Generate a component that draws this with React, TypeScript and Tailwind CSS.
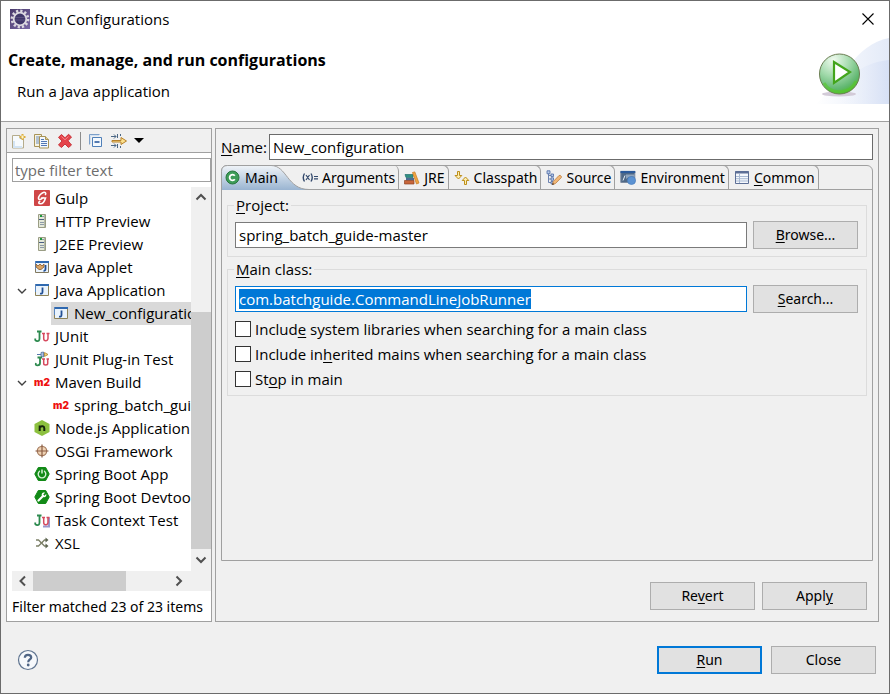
import { useEffect, useRef, type ReactNode } from "react";

type IconProps = { children: ReactNode; size?: number };

function Icon({ children, size = 16 }: IconProps) {
  return (
    <svg width={size} height={size} viewBox="0 0 16 16" className="shrink-0" aria-hidden="true">
      {children}
    </svg>
  );
}

const GearIcon = () => (
  <svg width="20" height="20" viewBox="0 0 20 20" className="shrink-0" aria-hidden="true">
    <defs>
      <linearGradient id="gearBg" x1="0" y1="0" x2="1" y2="1">
        <stop offset="0" stopColor="#4a3a6b" />
        <stop offset="1" stopColor="#7a68a6" />
      </linearGradient>
    </defs>
    <rect width="20" height="20" fill="url(#gearBg)" />
    <circle cx="10" cy="10" r="8" fill="none" stroke="#dcd8e0" strokeWidth="2.8" strokeDasharray="2.2 1.99" />
    <circle cx="10" cy="10" r="6.3" fill="#40376a" stroke="#dcd8e0" strokeWidth="1.8" />
    <path d="M5 8.500h10M5 11h10" stroke="#5b5080" strokeWidth="1" />
  </svg>
);

const NewIcon = () => (
  <Icon>
    <path d="M1.500 2.500h7.500v3h3.500v9.500h-11z" fill="#f6fafd" stroke="#b5ac8c" />
    <path d="M3 8v6h8" fill="none" stroke="#d3e4f4" strokeWidth="2" />
    <path d="M11.500 1v6M8.500 4h6" stroke="#dcae40" strokeWidth="2" />
    <path d="M11.500 2.500v3M10 4h3" stroke="#fff6c8" />
  </Icon>
);

const CopyIcon = () => (
  <Icon>
    <path d="M.5 1.500h7v12h-7z" fill="#f7f3e2" stroke="#a89458" />
    <path d="M2 4h3M2 6h3M2 8h3M2 10h3" stroke="#6d8fc0" />
    <path d="M5.500 3.500h6l3 3v8.500h-9z" fill="#f2f7fd" stroke="#a89458" />
    <path d="M11.500 3.500v3h3" fill="#e3cf90" stroke="#a89458" />
    <path d="M7 6.500h3M7 8.500h6M7 10.500h6M7 12.500h6" stroke="#5278b5" />
  </Icon>
);

const DeleteIcon = () => (
  <Icon>
    <path
      d="M1.500 4.300 4.500 1.500 8 4.800 11.500 1.300 14.500 4 11 7.800 14.500 12 11.500 14.500 8 11 4.500 14.500 1.500 12 5 8z"
      fill="#e5434a"
      stroke="#c9363c"
    />
    <path d="M4.500 3.500 8 6.800l3.500-3.300" fill="none" stroke="#f3858a" />
  </Icon>
);

const CollapseIcon = () => (
  <Icon>
    <path d="M1.500 11.500v-10h10" fill="none" stroke="#7c9fc9" />
    <path d="M2.500 11V2.500H11" fill="none" stroke="#cfe0f2" />
    <path d="M4.500 4.500h9v9h-9z" fill="#f4f9fe" stroke="#4f7fb8" />
    <path d="M6.500 9h5" stroke="#1f4f96" strokeWidth="1.500" />
  </Icon>
);

const FilterIcon = () => (
  <Icon>
    <path d="M0 3.500h5M0 12.500h5" stroke="#4b6785" />
    <path d="M3 1.500 5 3.500 3 5.500M3 10.500l2 2-2 2M6.500 1v4M6.500 11v4M9.500 1v2M9.500 13v2" fill="none" stroke="#4b6785" />
    <path d="M1 7.500h9V4.500L15.500 8 10 11.500V9H1z" fill="#fbe08c" stroke="#b7812a" />
  </Icon>
);

const GulpIcon = () => (
  <Icon>
    <rect width="16" height="16" rx="1" fill="#cf4647" />
    <path
      d="M11.500 4.500c.8-1.800-.6-2.800-2.300-2C6.500 3.500 4.300 6.500 4.500 8.500c.2 1.700 2.800 1 4.500-.8M7.500 8h4C10.800 10.500 9.500 13.800 6.500 13.800c-2 0-2.300-1.500-.8-2.300"
      fill="none"
      stroke="#fff"
      strokeWidth="1.600"
      strokeLinecap="round"
    />
  </Icon>
);

const ServerIcon = () => (
  <Icon>
    <path d="M4.500 1.500h7v13h-7z" fill="#e4e8d8" stroke="#9a9d84" />
    <path d="M6 3.500h4M6 9.500h4M6 11.500h4" stroke="#8d9aa8" />
    <rect x="6" y="2" width="2" height="2" fill="#1f9a3c" />
    <path d="M5 6.500h6" stroke="#4a5e83" />
    <path d="M10.500 2v12" stroke="#b4b9a8" />
  </Icon>
);

const WindowJIcon = ({ applet = false }: { applet?: boolean }) => (
  <Icon>
    <path d="M1.500 2.500h13v11h-13z" fill="#eaf3fc" stroke={applet ? "#82795e" : "#8d8258"} />
    <path d="M1 3h14" stroke="#2f69b0" strokeWidth="2" />
    <path d="M1.500 2v8" stroke="#5b86bd" />
    <path d={applet ? "M11.500 6v4q0 2-2 1.800" : "M8.500 5.500v4.500q0 2-2.500 1.600"} fill="none" stroke="#214f94" strokeWidth="1.800" />
    {applet && (
      <path d="M2 5l2 2 2-2 2 2 2-2v3L7 10.500H5L2 8z" fill="#d9a566" stroke="#8c5a2b" strokeWidth=".8" />
    )}
  </Icon>
);

const JunitIcon = ({ variant = "plain" }: { variant?: "plain" | "plugin" | "task" }) => (
  <Icon>
    {variant === "plugin" && (
      <>
        <path d="M3 3.500h4" stroke="#5577aa" />
        <path d="M7 1.500 9.500 1v5L7 5.500z" fill="#a9c0e2" stroke="#53719f" strokeWidth=".8" />
        <path d="m10.500 1.500 3.500 2-3.500 2z" fill="#f4d779" stroke="#a98030" strokeWidth=".8" />
      </>
    )}
    {variant === "task" && <path d="M9 14.500h6V5.500" fill="none" stroke="#9a97cb" strokeWidth="2" />}
    <path
      d={variant === "plugin" ? "M3.500 6.500h4.500M6 6.500v5.500q0 2.300-2.500 2.300t-1.500-2.300" : "M3 3.500h4.500M5.500 3.500v7q0 2.800-2.500 2.500t-1.500-2.500"}
      fill="none"
      stroke="#2d8a4f"
      strokeWidth="1.800"
    />
    <path
      d={variant === "plugin" ? "M8 8h3M12.500 8H15M9.700 8v4.500q0 1.500 2 1.500t2-1.500V8" : "M8 5.500h3M12.500 5.500H15.500M9.700 5.500v5q0 2.300 2 2.300t2.300-2.300v-5"}
      fill="none"
      stroke="#d64a5e"
      strokeWidth="1.500"
    />
  </Icon>
);

const MavenIcon = () => (
  <span className="w-4 shrink-0 text-center font-['Inter'] text-[10px] leading-4 font-black text-[#ee1111]" aria-hidden="true">
    m2
  </span>
);

const NodeIcon = () => (
  <Icon>
    <path d="m8 0 7.500 4v8L8 16 .5 12V4z" fill="#8cc03f" />
    <path d="M5.700 11V5.500M5.700 7.300Q7 6 8.800 6.200q1.500.2 1.500 2V11" fill="none" stroke="#16240c" strokeWidth="2" />
  </Icon>
);

const OsgiIcon = () => (
  <Icon>
    <circle cx="8" cy="8" r="4.700" fill="#f0d3b4" stroke="#a87f62" strokeWidth="1.300" />
    <path d="M8 1.500v13M1.500 8h13" stroke="#8a5d44" strokeWidth="1.200" />
  </Icon>
);

const SpringIcon = ({ tool = false }: { tool?: boolean }) => (
  <Icon>
    <path d="M4.300 1.500h7.400L15.200 8l-3.500 6.500H4.300L.8 8z" fill="#128a17" stroke="#128a17" strokeLinejoin="round" />
    {tool ? (
      <>
        <path d="m4.500 11.500 4.500-4.500" stroke="#fff" strokeWidth="2.200" strokeLinecap="round" />
        <path d="M11 3.800 9.200 5.600l1.200 1.200 1.800-1.700c.6 1.600-.6 3.300-2.300 3.200S7.200 6.500 7.800 5.100 9.800 3.300 11 3.800" fill="#fff" />
      </>
    ) : (
      <>
        <path d="M5.500 5.200a3.800 3.800 0 1 0 5 0" fill="none" stroke="#d9f3d9" strokeWidth="1.400" strokeLinecap="round" />
        <path d="M8 3.500v4" stroke="#d9f3d9" strokeWidth="1.500" />
      </>
    )}
  </Icon>
);

const XslIcon = () => (
  <Icon>
    <path d="M2 5h2.500l6 6H13M2 11h2.500l6-6H13" fill="none" stroke="#7d8168" strokeWidth="1.300" />
    <path d="m11.500 2.500 3 2.500-3 2.500zM11.500 8.500l3 2.500-3 2.500z" fill="#5c6450" />
  </Icon>
);

const ClassIcon = () => (
  <Icon>
    <circle cx="7.500" cy="7.500" r="6.500" fill="#3d9c58" stroke="#27763d" />
    <path d="M9.800 5.700A2.900 2.900 0 1 0 9.800 9.300" fill="none" stroke="#fff" strokeWidth="1.800" />
  </Icon>
);

const ArgumentsIcon = () => (
  <Icon>
    <path d="M2.500 3.500Q0 7.500 2.500 11.500M9 3.500q2.500 4 0 8" fill="none" stroke="#33496c" strokeWidth="1.400" />
    <path d="m4 5 3.500 5M7.500 5 4 10M12 6.500h4M12 8.800h4" fill="none" stroke="#33496c" strokeWidth="1.200" />
  </Icon>
);

const JreIcon = () => (
  <Icon>
    <path d="M1 4.500h8v3H2z" fill="#2f8f83" stroke="#1f6f6b" strokeWidth=".7" />
    <path d="M2 8h8v2.500H2z" fill="#4c6b94" />
    <path d="M.5 10.500H10V14H.5z" fill="#c7663b" stroke="#8f4322" strokeWidth=".7" />
    <path d="m8.500 2.500 2.300-.6L15 13l-2.500 1z" fill="#f0a544" stroke="#c6791e" strokeWidth=".7" />
  </Icon>
);

const ClasspathIcon = () => (
  <Icon>
    <path d="M3.500 1.500h2v4h2.300L4.500 9 1 5.500h2.500z" fill="#fdeeb0" stroke="#bd8f1c" />
    <path d="M10.500 14.500h2v-4h2.300L11.500 7 8.200 10.500h2.300z" fill="#fdeeb0" stroke="#bd8f1c" />
  </Icon>
);

const SourceIcon = () => (
  <Icon>
    <path d="M2.500 3v9.500H5M2.500 5.500H5M2.500 9H5" fill="none" stroke="#6d83b0" />
    <path d="M1 .8h3v3H1zM5 4h2.500v2.500H5zM5 7.800h2.500v2.500H5zM5 11.500h2v2.500H5z" fill="#b9cbe8" stroke="#4d6aa5" strokeWidth=".8" />
    <path d="m6.500 14.500.8-3L13 5.500q1.300-.6 2.300.8.4 1-.2 1.500L9.500 13.500z" fill="#f2b877" stroke="#bd7c3e" strokeWidth=".8" />
    <path d="m6 15 .8-2 1.500 1.200z" fill="#4c3524" />
  </Icon>
);

const EnvironmentIcon = () => (
  <Icon>
    <path d="M.8 1.500h14v11H.8z" fill="#4f6987" stroke="#7d8ba0" />
    <path d="M.5 2h14.800" stroke="#2b5a9b" strokeWidth="2.200" />
    <path d="M3 10.500 5 5.500" stroke="#e6eef7" />
    <path d="M6 4.500h8.500V7Q10 5 6 9z" fill="#8ea4bd" />
    <circle cx="11.500" cy="10.500" r="4" fill="#5b92d2" stroke="#4a80c0" strokeWidth=".7" />
  </Icon>
);

const TableIcon = () => (
  <Icon>
    <path d="M1.500 1.500h13v12h-13z" fill="#f5f8fc" stroke="#5d6f96" />
    <path d="M1 2.500h14" stroke="#5d6f96" strokeWidth="2" />
    <path d="M5.500 4v9M2 6.500h12M2 8.700h12M2 11h12" stroke="#a9bad3" />
  </Icon>
);

type Node = { label: string; icon: ReactNode; open?: boolean; child?: boolean; selected?: boolean };

const nodes: Node[] = [
  { label: "Gulp", icon: <GulpIcon /> },
  { label: "HTTP Preview", icon: <ServerIcon /> },
  { label: "J2EE Preview", icon: <ServerIcon /> },
  { label: "Java Applet", icon: <WindowJIcon applet /> },
  { label: "Java Application", icon: <WindowJIcon />, open: true },
  { label: "New_configuration", icon: <WindowJIcon />, child: true, selected: true },
  { label: "JUnit", icon: <JunitIcon /> },
  { label: "JUnit Plug-in Test", icon: <JunitIcon variant="plugin" /> },
  { label: "Maven Build", icon: <MavenIcon />, open: true },
  { label: "spring_batch_guide", icon: <MavenIcon />, child: true },
  { label: "Node.js Application", icon: <NodeIcon /> },
  { label: "OSGi Framework", icon: <OsgiIcon /> },
  { label: "Spring Boot App", icon: <SpringIcon /> },
  { label: "Spring Boot Devtools", icon: <SpringIcon tool /> },
  { label: "Task Context Test", icon: <JunitIcon variant="task" /> },
  { label: "XSL", icon: <XslIcon /> },
];

const Chevron = ({ d, bold = false }: { d: string; bold?: boolean }) => (
  <svg width="12" height="12" viewBox="0 0 12 12" className="shrink-0" aria-hidden="true">
    <path d={d} fill="none" stroke={bold ? "#505050" : "#404040"} strokeWidth={bold ? 2 : 1.4} />
  </svg>
);

function Tree() {
  return (
    <ul role="tree" aria-label="Launch configurations" className="min-w-0 flex-1 overflow-hidden">
      {nodes.map((n) => (
        <li
          key={n.label}
          role="treeitem"
          aria-selected={!!n.selected}
          className={`flex h-[23px] items-center whitespace-nowrap ${n.child ? "pl-10" : "pl-1"}`}
        >
          {!n.child && (
            <span className="flex w-[18px] shrink-0">{n.open && <Chevron d="M2 4l4 4 4-4" />}</span>
          )}
          <span className={`flex h-full grow items-center gap-[5px] pb-px ${n.selected ? "bg-[#d9d9d9]" : ""} ${n.child ? "-ml-px pl-0.5" : ""}`}>
            {n.icon}
            {n.label}
          </span>
        </li>
      ))}
    </ul>
  );
}

const toolButton = "flex h-5 w-5 items-center justify-center";

function Sidebar() {
  return (
    <section className="flex w-[206px] shrink-0 flex-col overflow-hidden border border-[#a0a0a0] bg-white">
      <div role="toolbar" className="flex h-6 shrink-0 items-center gap-[3px] border-b border-[#a0a0a0] bg-[#f0f0f0] pl-[2px]">
        <button className={toolButton} aria-label="New launch configuration"><NewIcon /></button>
        <button className={toolButton} aria-label="Duplicate"><CopyIcon /></button>
        <button className={toolButton} aria-label="Delete"><DeleteIcon /></button>
        <span className="mx-[2px] h-[18px] w-px bg-[#8c8c8c]" />
        <button className={toolButton} aria-label="Collapse all"><CollapseIcon /></button>
        <button className={toolButton} aria-label="Filter"><FilterIcon /></button>
        <button className="flex h-5 items-center pl-0.5" aria-label="Filter menu">
          <svg width="10" height="5" viewBox="0 0 10 5" aria-hidden="true"><path d="M0 0h10L5 5z" /></svg>
        </button>
      </div>
      <div className="flex min-h-0 flex-1 flex-col pt-[5px] pl-[5px]">
        <input
          aria-label="Filter"
          placeholder="type filter text"
          className="h-6 w-full shrink-0 border border-[#a0a0a0] px-0.5 outline-none placeholder:text-[#6d6d6d]"
        />
        <div className="mt-[5px] flex min-h-0 flex-1">
          <Tree />
          <div className="flex w-5 shrink-0 flex-col items-center bg-[#f0f0f0]" aria-hidden="true">
            <div className="flex h-5 items-center"><Chevron bold d="M1.500 8.500 6 4l4.500 4.500" /></div>
            <div className="h-[105px]" />
            <div className="w-full flex-1 bg-[#cdcdcd]" />
            <div className="flex h-[22px] items-center"><Chevron bold d="M1.500 3.500 6 8l4.500-4.500" /></div>
          </div>
        </div>
        <div className="flex h-5 shrink-0 items-center bg-[#f0f0f0]" aria-hidden="true">
          <div className="flex w-[21px] justify-center"><Chevron bold d="M8 1.500 3.500 6 8 10.500" /></div>
          <div className="h-full w-[93px] bg-[#cdcdcd]" />
          <div className="grow" />
          <div className="mr-6 flex w-4 justify-center"><Chevron bold d="M3.500 1.500 8 6l-4.500 4.500" /></div>
        </div>
        <p className="h-[30px] shrink-0 font-['Noto_Sans','Open_Sans',sans-serif] text-[14px] leading-8 whitespace-nowrap">
          Filter matched 23 of 23 items
        </p>
      </div>
    </section>
  );
}

const U = ({ children }: { children: ReactNode }) => <span className="underline underline-offset-2">{children}</span>;

function PushButton({ children, primary = false }: { children: ReactNode; primary?: boolean }) {
  return (
    <button
      className={`h-7 w-[105px] shrink-0 bg-[#e1e1e1] font-['Noto_Sans','Open_Sans',sans-serif] text-[14px] ${primary ? "border-2 border-[#0078d7]" : "border border-[#adadad]"}`}
    >
      {children}
    </button>
  );
}

const tabs: { icon: ReactNode; label: ReactNode; id: string }[] = [
  { id: "arguments", icon: <ArgumentsIcon />, label: "Arguments" },
  { id: "jre", icon: <JreIcon />, label: "JRE" },
  { id: "classpath", icon: <ClasspathIcon />, label: "Classpath" },
  { id: "source", icon: <SourceIcon />, label: "Source" },
  { id: "environment", icon: <EnvironmentIcon />, label: "Environment" },
  { id: "common", icon: <TableIcon />, label: <><U>C</U>ommon</> },
];

function TabBar() {
  return (
    <div role="tablist" className="flex h-6 border-b border-[#a0a0a0] font-['Noto_Sans','Open_Sans',sans-serif] text-[14px]">
      <button role="tab" aria-selected="true" className="relative -mt-px -ml-px flex w-20 items-center pt-0.5 pl-1">
        <svg width="90" height="25" viewBox="0 0 90 25" className="absolute top-0 left-0" aria-hidden="true">
          <defs>
            <linearGradient id="tabFill" x1="0" y1="0" x2="0" y2="1">
              <stop offset="0" stopColor="#f0f4f8" />
              <stop offset="1" stopColor="#99b4d1" />
            </linearGradient>
          </defs>
          <path d="M.5 25V6.500Q.5.5 6.500.5H50C66 .5 66 24.500 88 24.500V25z" fill="url(#tabFill)" />
          <path d="M.5 25V6.500Q.5.5 6.500.5H50C66 .5 66 24.500 88 24.500" fill="none" stroke="#a0a0a0" />
        </svg>
        <span className="relative flex items-center gap-1"><ClassIcon />Main</span>
      </button>
      {tabs.map((t, i) => (
        <button
          key={t.id}
          role="tab"
          aria-selected="false"
          className={`relative -mt-px flex items-center gap-1 rounded-tr-[6px] border-r border-[#a0a0a0] pt-px pr-[3px] ${i === 0 ? "pl-px" : "border-t pl-[5px]"}`}
        >
          {t.icon}
          <span>{t.label}</span>
        </button>
      ))}
    </div>
  );
}

const field = "h-[26px] min-w-0 flex-1 border bg-white px-[3px] outline-none selection:bg-[#0078d7] selection:text-white";

const options: { id: string; label: ReactNode }[] = [
  { id: "system", label: <>Includ<U>e</U> system libraries when searching for a main class</> },
  { id: "inherited", label: <>Include in<U>h</U>erited mains when searching for a main class</> },
  { id: "stop", label: <>St<U>o</U>p in main</> },
];

function MainTab() {
  const mainClass = useRef<HTMLInputElement>(null);
  useEffect(() => {
    mainClass.current?.focus();
    mainClass.current?.select();
  }, []);

  return (
    <div className="flex-1 px-[5px] pt-[5px]">
      <fieldset className="min-w-0 border border-[#dcdcdc] pb-[7px]">
        <legend className="ml-[6px] h-5 px-0.5 leading-5"><label htmlFor="project"><U>P</U>roject:</label></legend>
        <div className="mt-[6px] flex items-center gap-[6px] pr-2 pl-[7px]">
          <input id="project" defaultValue="spring_batch_guide-master" className={`${field} border-[#7a7a7a]`} />
          <PushButton><U>B</U>rowse...</PushButton>
        </div>
      </fieldset>
      <fieldset className="mt-[2px] min-w-0 border border-[#dcdcdc] pb-1">
        <legend className="ml-[6px] h-5 px-0.5 leading-5"><label htmlFor="mainClass"><U>M</U>ain class:</label></legend>
        <div className="mt-[6px] flex items-center gap-[6px] pr-2 pl-[7px]">
          <input id="mainClass" ref={mainClass} defaultValue="com.batchguide.CommandLineJobRunner" className={`${field} border-[#0078d7]`} />
          <PushButton><U>S</U>earch...</PushButton>
        </div>
        <div className="mt-[3px] pl-[7px]">
          {options.map((o) => (
            <div key={o.id} className="flex h-[25px] items-center gap-1">
              <input id={o.id} type="checkbox" className="h-4 w-4 appearance-none border border-[#333333] bg-white checked:bg-[#0078d7]" />
              <label htmlFor={o.id}>{o.label}</label>
            </div>
          ))}
        </div>
      </fieldset>
    </div>
  );
}

function Editor() {
  return (
    <section className="flex min-w-0 flex-1 flex-col border border-[#a0a0a0] px-[5px] pt-[5px] pb-[11px]">
      <div className="flex items-center">
        <label htmlFor="name" className="w-12 shrink-0"><U>N</U>ame:</label>
        <input id="name" defaultValue="New_configuration" className={`${field} border-[#6b6b6b]`} />
      </div>
      <div className="mt-[5px] flex flex-1 flex-col rounded-t-[6px] border border-[#a0a0a0]">
        <TabBar />
        <MainTab />
      </div>
      <div className="mt-[21px] flex justify-end gap-[7px] pr-[6px]">
        <PushButton>Re<U>v</U>ert</PushButton>
        <PushButton>Appl<U>y</U></PushButton>
      </div>
    </section>
  );
}

const Banner = () => (
  <svg width="90" height="68" viewBox="0 1 90 68" className="shrink-0" aria-hidden="true">
    <defs>
      <linearGradient id="swoosh" x1="0" y1="0" x2="1" y2="0">
        <stop offset="0" stopColor="#ffffff" />
        <stop offset="1" stopColor="#e3eaf8" />
      </linearGradient>
      <linearGradient id="swoosh2" x1="0" y1="0" x2="1" y2="0">
        <stop offset=".2" stopColor="#eef2fb" stopOpacity="0" />
        <stop offset="1" stopColor="#d6e0f5" />
      </linearGradient>
      <radialGradient id="ball" cx=".35" cy=".15" r=".9">
        <stop offset="0" stopColor="#f0faef" />
        <stop offset=".45" stopColor="#a3daac" />
        <stop offset=".8" stopColor="#62b872" />
        <stop offset="1" stopColor="#4bb62a" />
      </radialGradient>
    </defs>
    <path d="M16 70C45 45 55 10 90 3v67z" fill="url(#swoosh)" />
    <path d="M30 70C45 45 60 28 90 25v45z" fill="url(#swoosh2)" />
    <ellipse cx="40" cy="59" rx="17" ry="2.500" fill="#d3cbd8" />
    <circle cx="40.500" cy="39" r="20" fill="url(#ball)" stroke="#6c7d53" />
    <path d="M25 48a18 18 0 0 0 32-2" fill="none" stroke="#57c926" strokeWidth="3" opacity=".6" />
    <path d="M35 27v21l16-11z" fill="#fff" stroke="#43a51c" strokeWidth="2.200" />
  </svg>
);

export default function App() {
  return (
    <div className="flex min-h-screen flex-col border border-[#6b6b6b] bg-[#f0f0f0] font-['Open_Sans','Noto_Sans',sans-serif] text-[15px] leading-5 text-black">
      <header className="border-b border-[#a0a0a0] bg-white">
        <div className="flex h-[35px] items-center justify-between pr-[15px] pl-[9px]">
          <div className="flex items-center gap-[5px]">
            <GearIcon />
            <span>Run Configurations</span>
          </div>
          <button aria-label="Close window">
            <svg width="12" height="12" viewBox="0 0 12 12" aria-hidden="true"><path d="M.5.5l11 11M11.500.5l-11 11" stroke="#000" strokeWidth="1.100" /></svg>
          </button>
        </div>
        <div className="flex h-[85px] justify-between">
          <div className="pt-[14px] pl-[7px]">
            <h1 className="text-[16px] leading-5 font-bold">Create, manage, and run configurations</h1>
            <p className="mt-[11px] pl-[9px]">Run a Java application</p>
          </div>
          <Banner />
        </div>
      </header>
      <main className="mt-[6px] flex flex-1 gap-[3px] pr-[10px] pl-[5px]">
        <Sidebar />
        <Editor />
      </main>
      <footer className="flex h-[71px] items-center justify-between pt-1 pr-[13px] pl-4">
        <button aria-label="Help">
          <svg width="22" height="22" viewBox="0 0 22 22" aria-hidden="true">
            <circle cx="11" cy="11" r="9.500" fill="#f6f8fb" stroke="#5f7490" strokeWidth="1.200" />
            <path d="M7.800 8.700Q7.900 5.800 11 5.800t3.200 2.600c0 2-3 2.200-3 4.800" fill="none" stroke="#4f6585" strokeWidth="2.200" />
            <circle cx="11.200" cy="16" r="1.400" fill="#4f6585" />
          </svg>
        </button>
        <div className="flex gap-[9px]">
          <PushButton primary><U>R</U>un</PushButton>
          <PushButton>Close</PushButton>
        </div>
      </footer>
    </div>
  );
}
